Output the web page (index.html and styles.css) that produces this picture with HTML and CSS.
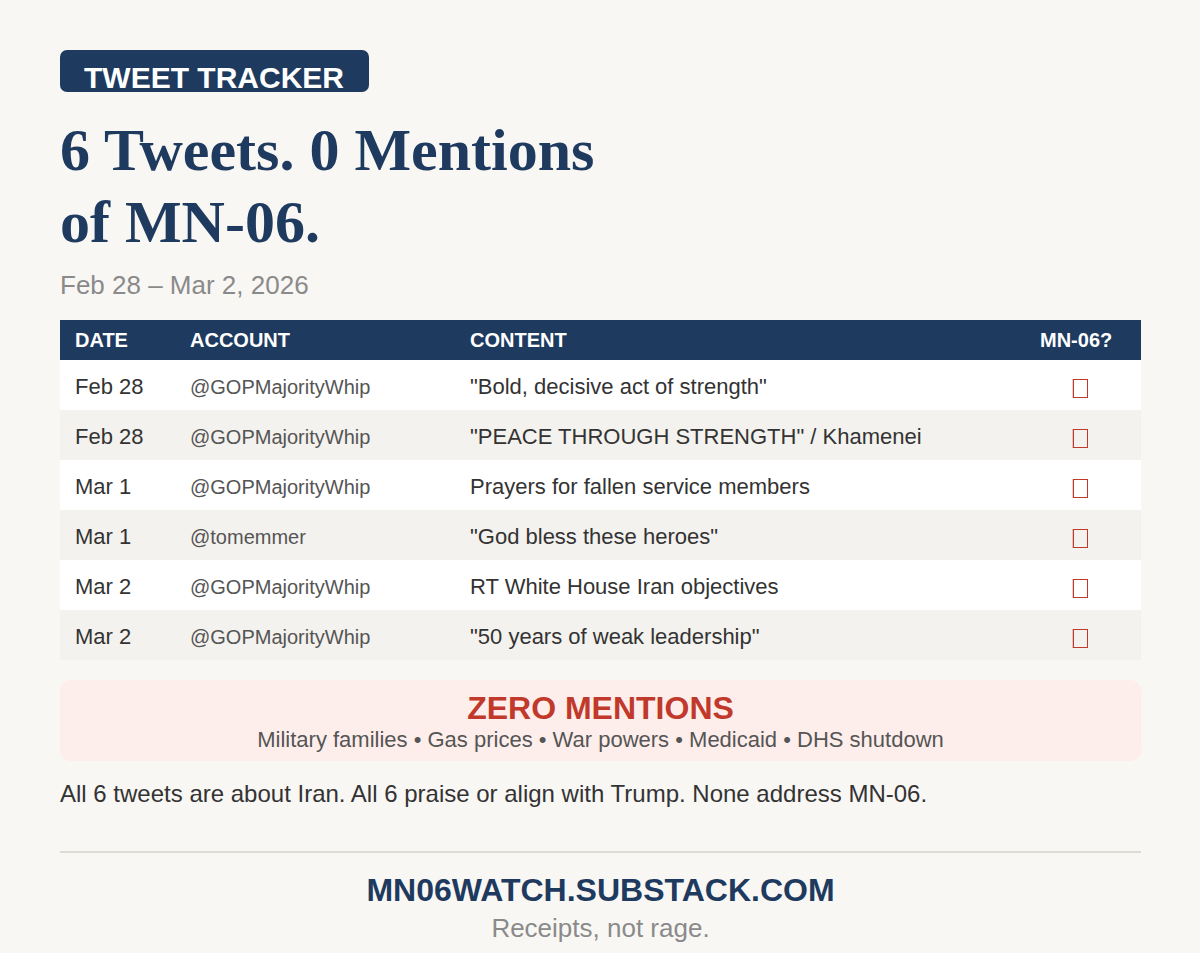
FILE: index.html
```html
<!DOCTYPE html>
<html lang="en">
<head>
<meta charset="utf-8">
<title>Tweet Tracker</title>
<link rel="stylesheet" href="styles.css">
</head>
<body>
<main class="page">
  <div class="badge">TWEET TRACKER</div>
  <h1 class="title">6 Tweets. 0 Mentions<br>of MN-06.</h1>
  <p class="dates">Feb 28 – Mar 2, 2026</p>

  <div class="table">
    <div class="row head">
      <div class="c-date">DATE</div>
      <div class="c-acct">ACCOUNT</div>
      <div class="c-text">CONTENT</div>
      <div class="c-mn">MN-06?</div>
    </div>
    <div class="row">
      <div class="c-date">Feb 28</div>
      <div class="c-acct">@GOPMajorityWhip</div>
      <div class="c-text">"Bold, decisive act of strength"</div>
      <div class="c-mn"><span class="tofu"></span></div>
    </div>
    <div class="row alt">
      <div class="c-date">Feb 28</div>
      <div class="c-acct">@GOPMajorityWhip</div>
      <div class="c-text">"PEACE THROUGH STRENGTH" / Khamenei</div>
      <div class="c-mn"><span class="tofu"></span></div>
    </div>
    <div class="row">
      <div class="c-date">Mar 1</div>
      <div class="c-acct">@GOPMajorityWhip</div>
      <div class="c-text">Prayers for fallen service members</div>
      <div class="c-mn"><span class="tofu"></span></div>
    </div>
    <div class="row alt">
      <div class="c-date">Mar 1</div>
      <div class="c-acct">@tomemmer</div>
      <div class="c-text">"God bless these heroes"</div>
      <div class="c-mn"><span class="tofu"></span></div>
    </div>
    <div class="row">
      <div class="c-date">Mar 2</div>
      <div class="c-acct">@GOPMajorityWhip</div>
      <div class="c-text">RT White House Iran objectives</div>
      <div class="c-mn"><span class="tofu"></span></div>
    </div>
    <div class="row alt">
      <div class="c-date">Mar 2</div>
      <div class="c-acct">@GOPMajorityWhip</div>
      <div class="c-text">"50 years of weak leadership"</div>
      <div class="c-mn"><span class="tofu"></span></div>
    </div>
  </div>

  <section class="zero">
    <div class="zero-title">ZERO MENTIONS</div>
    <div class="zero-list">Military families • Gas prices • War powers • Medicaid • DHS shutdown</div>
  </section>

  <p class="summary">All 6 tweets are about Iran. All 6 praise or align with Trump. None address MN-06.</p>

  <footer class="footer">
    <div class="site">MN06WATCH.SUBSTACK.COM</div>
    <div class="tagline">Receipts, not rage.</div>
  </footer>
</main>
</body>
</html>
```

FILE: styles.css
```css
html, body {
  margin: 0;
  padding: 0;
  background: #f9f7f4;
}

body {
  font-family: "Liberation Sans", Arial, sans-serif;
  color: #333333;
}

.page {
  padding: 50px 59px 0 60px;
  display: flex;
  flex-direction: column;
  align-items: stretch;
}

.badge {
  align-self: flex-start;
  background: #1e3a5f;
  color: #ffffff;
  font-weight: bold;
  font-size: 30px;
  line-height: 29px;
  height: 42px;
  box-sizing: border-box;
  padding: 13px 25px 0 24px;
  border-radius: 7px;
}

.title {
  margin: 22px 0 0;
  font-family: "Liberation Serif", "Times New Roman", serif;
  font-weight: bold;
  font-size: 60px;
  line-height: 72px;
  color: #1e3a5f;
}

.dates {
  margin: 12px 0 0;
  font-size: 26px;
  line-height: 30px;
  color: #8a8a8a;
}

.table {
  margin-top: 20px;
  display: flex;
  flex-direction: column;
}

.row {
  display: grid;
  grid-template-columns: 115px 280px 570px 1fr;
  height: 50px;
  align-items: center;
  background: #ffffff;
  font-size: 22px;
  color: #333333;
}

.row > div {
  padding-left: 15px;
  padding-top: 4px;
}

.row.alt {
  background: #f3f2ee;
}

.row.head {
  height: 40px;
  background: #1e3a5f;
  color: #ffffff;
  font-weight: bold;
  font-size: 20px;
}

.row.head > div {
  padding-top: 0;
}

.c-acct {
  font-size: 20px;
  color: #555555;
}

.head .c-acct {
  color: #ffffff;
}

.row:not(.head) .c-mn {
  padding-left: 0;
  display: flex;
  justify-content: center;
  padding-right: 5px;
}

.tofu {
  display: block;
  width: 13px;
  height: 17px;
  margin-top: 2px;
  border: 1px solid #c0392b;
  box-shadow: -1px 0 0 rgba(192, 57, 43, 0.25);
}

.zero {
  margin-top: 20px;
  background: #feeeeb;
  border-radius: 10px;
  padding: 10px 20px 9px;
  text-align: center;
}

.zero-title {
  font-weight: bold;
  font-size: 32px;
  line-height: 37px;
  color: #c0392b;
}

.zero-list {
  font-size: 22px;
  line-height: 25px;
  color: #555555;
}

.summary {
  margin: 19px 0 0;
  font-size: 24px;
  line-height: 28px;
  color: #333333;
}

.footer {
  margin-top: 43px;
  border-top: 2px solid #dddbd6;
  padding-top: 19px;
  text-align: center;
}

.site {
  font-weight: bold;
  font-size: 32px;
  line-height: 37px;
  color: #1e3a5f;
}

.tagline {
  margin-top: 4px;
  font-size: 26px;
  line-height: 30px;
  color: #8a8a8a;
}
```
